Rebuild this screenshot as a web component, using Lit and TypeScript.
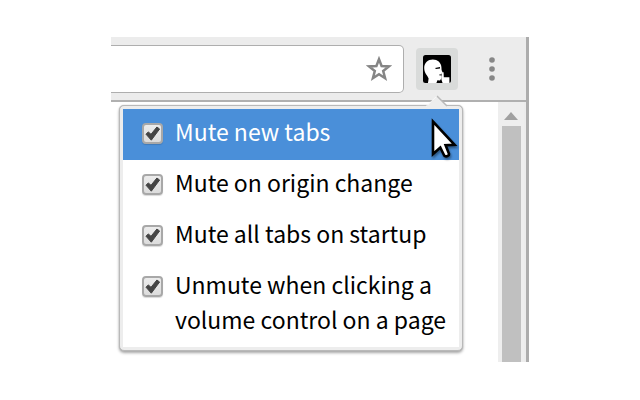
import { LitElement, html, css, svg } from "lit";
import { customElement, property, state } from "lit/decorators.js";
import { classMap } from "lit/directives/class-map.js";

interface Option {
  id: string;
  label: string;
  checked: boolean;
}

@customElement("browser-toolbar")
export class BrowserToolbar extends LitElement {
  static styles = css`
    :host {
      display: flex;
      align-items: center;
      height: 63px;
      background: #ececec;
      border-bottom: 2px solid #b0b0b0;
      box-sizing: content-box;
    }
    .omnibox {
      flex: 1;
      min-width: 0;
      display: flex;
      align-items: center;
      height: 48px;
      box-sizing: border-box;
      padding-right: 11px;
      background: #fff;
      border: 1px solid #aeaeae;
      border-left: 0;
      border-radius: 0 5px 5px 0;
    }
    .address {
      flex: 1;
      min-width: 0;
      height: 40px;
      border: 0;
      padding: 0 12px;
      background: transparent;
      outline: none;
      font: 20px "Noto Sans CJK SC", sans-serif;
    }
    button {
      display: flex;
      align-items: center;
      justify-content: center;
      padding: 0;
      border: 0;
      background: transparent;
    }
    svg {
      display: block;
    }
    .extension {
      width: 42px;
      height: 42px;
      margin-left: 12px;
      border-radius: 4px;
      background: #d9dbda;
    }
    .more {
      width: 24px;
      height: 42px;
      margin: 0 22px;
    }
  `;

  render() {
    return html`
      <div class="omnibox">
        <input class="address" type="text" aria-label="Address" />
        <button aria-label="Bookmark this page">
          <svg width="26" height="26" viewBox="0 0 26 26">
            <path
              d="M13 3.2 L15.6 10 L22.9 10.4 L17.2 15 L19.1 22.2 L13 18.2 L6.9 22.2 L8.8 15 L3.1 10.4 L10.4 10 Z"
              fill="none"
              stroke="#858585"
              stroke-width="2.5"
            />
          </svg>
        </button>
      </div>
      <button class="extension" aria-label="Mute tabs">
        <svg width="30" height="30" viewBox="0 0 30 30">
          <rect x="1" y="1" width="28" height="28" rx="2.5" fill="#000" />
          <path
            d="M6 29 L6.6 24.6 C6.2 22 2.2 19.6 2.2 14 C2.2 9 6 5.6 10.8 5.6 C15.6 5.6 19 8.6 19.4 13 L19.6 16 L20.6 18.6 L19.4 19.6 L19.6 24 L18 26.4 L15.4 26.2 L14.4 29 Z"
            fill="#fff"
          />
          <path d="M13 14 L18 13 L18 14.6 L14 15 Z" fill="#000" />
          <path
            d="M19.4 18.2 L21.6 18.2 L21.8 23.2 L27.4 23.2 L27.4 29 L20.6 29 L19.4 25.4 Z"
            fill="#fff"
          />
          <path d="M17.4 20.4 h2.4 v1 h-2.4 Z" fill="#000" />
        </svg>
      </button>
      <button class="more" aria-label="Menu">
        <svg width="6" height="24" viewBox="0 0 6 24">
          ${[3, 12, 21].map(
            (y) => svg`<circle cx="3" cy=${y} r="2.8" fill="#878787" />`,
          )}
        </svg>
      </button>
    `;
  }
}

@customElement("options-popup")
export class OptionsPopup extends LitElement {
  @property({ attribute: false }) options: Option[] = [];
  @state() private active = "new-tabs";

  static styles = css`
    :host {
      display: block;
      box-sizing: border-box;
      padding: 3px;
      background: #ededed;
      border: 1px solid #b9b9b9;
      border-radius: 5px;
      box-shadow: 0 0 1px #aaa, 0 2px 3px rgba(0, 0, 0, 0.35);
    }
    .tip {
      position: absolute;
      right: 14px;
      top: -11px;
      display: block;
    }
    .list {
      background: #fff;
    }
    .option {
      display: flex;
      gap: 12px;
      padding: 5px 12px 11px 19px;
      font: 23px/35px "Noto Sans CJK SC", sans-serif;
      color: #000;
    }
    .option:last-child {
      padding-bottom: 10px;
    }
    .active {
      background: #4a8fd9;
      color: #fff;
    }
    .box {
      position: relative;
      flex: none;
      display: block;
      width: 21px;
      height: 21px;
      margin-top: 9px;
    }
    .check {
      appearance: none;
      display: block;
      width: 21px;
      height: 21px;
      margin: 0;
      box-sizing: border-box;
      border: 2px solid #a8a8a8;
      border-radius: 4px;
      background: linear-gradient(#ececec, #dcdcdc);
      box-shadow: 0 1px 1px rgba(0, 0, 0, 0.15);
    }
    .mark {
      position: absolute;
      inset: 0;
      pointer-events: none;
      visibility: hidden;
    }
    .check:checked + .mark {
      visibility: visible;
    }
  `;

  render() {
    return html`
      <svg class="tip" width="22" height="12" viewBox="0 0 22 12">
        <path d="M0 12 L11 1 L22 12 Z" fill="#ededed" />
        <path d="M0 11.5 L11 1" stroke="#f8f8f8" stroke-width="1" />
        <path d="M11 1 L21 11" stroke="#b9b9b9" stroke-width="1.5" />
      </svg>
      <div class="list">
        ${this.options.map(
          (o) => html`
            <label
              class=${classMap({ option: true, active: o.id === this.active })}
              @mouseenter=${() => (this.active = o.id)}
            >
              <span class="box">
                <input class="check" type="checkbox" .checked=${o.checked} />
                <svg class="mark" width="21" height="21" viewBox="0 0 21 21">
                  <path
                    d="M4 11.2 L6.3 8.9 L9 11.3 L14.9 4 L17.6 6 L9.3 17.2 Z"
                    fill="#444"
                    stroke="#444"
                    stroke-linejoin="round"
                  />
                </svg>
              </span>
              <span>${o.label}</span>
            </label>
          `,
        )}
      </div>
    `;
  }
}

@customElement("app-root")
export class AppRoot extends LitElement {
  private options: Option[] = [
    { id: "new-tabs", label: "Mute new tabs", checked: true },
    { id: "origin", label: "Mute on origin change", checked: true },
    { id: "startup", label: "Mute all tabs on startup", checked: true },
    {
      id: "volume",
      label: "Unmute when clicking a volume control on a page",
      checked: true,
    },
  ];

  static styles = css`
    :host {
      display: flex;
      min-height: 100vh;
      box-sizing: border-box;
      padding: 37px 111px 38px;
      background: #fff;
    }
    .window {
      flex: 1;
      min-width: 0;
      display: flex;
      flex-direction: column;
      border-right: 3px solid #acacac;
      background: #ececec;
    }
    .page {
      position: relative;
      flex: 1;
      display: flex;
      justify-content: flex-end;
      margin-right: 2px;
      background: #fff;
    }
    .scrollbar {
      display: flex;
      flex-direction: column;
      align-items: center;
      width: 26px;
      background: #eeeeee;
    }
    .up {
      display: block;
      margin: 10px 0 6px;
    }
    .thumb {
      flex: 1;
      width: 19px;
      background: #c0c0c0;
    }
    .popup {
      position: absolute;
      top: 3px;
      left: 8px;
      right: 61px;
    }
    .pointer {
      position: absolute;
      top: 16px;
      right: 66px;
      filter: drop-shadow(1px 2px 1px rgba(0, 0, 0, 0.4));
      pointer-events: none;
    }
  `;

  render() {
    return html`
      <div class="window">
        <browser-toolbar></browser-toolbar>
        <div class="page">
          <div class="scrollbar">
            <svg class="up" width="14" height="8" viewBox="0 0 14 8">
              <path d="M0 8 L7 0 L14 8 Z" fill="#a0a0a0" />
            </svg>
            <div class="thumb"></div>
          </div>
          <options-popup class="popup" .options=${this.options}></options-popup>
          <svg class="pointer" width="28" height="42" viewBox="0 0 28 42">
            <path
              d="M3 3.5 L3 36 L10.3 29.5 L14.2 37.5 Q16.5 39.5 18.8 37.2 L19 35.8 L15.6 27.2 L24.6 26.8 Z"
              fill="#fff"
              stroke="#000"
              stroke-width="2.6"
            />
          </svg>
        </div>
      </div>
    `;
  }
}
